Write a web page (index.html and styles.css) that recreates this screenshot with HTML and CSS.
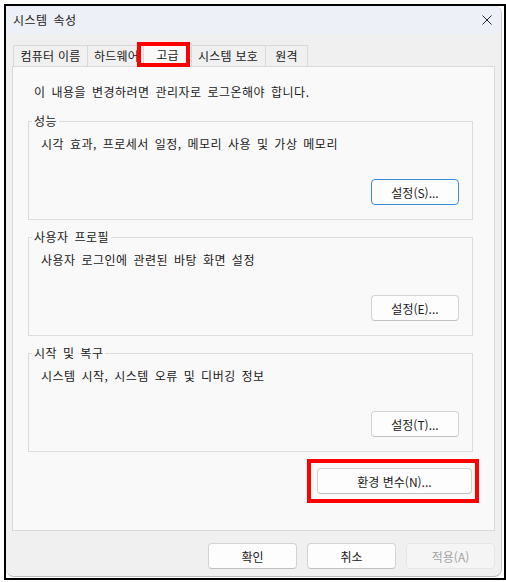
FILE: index.html
```html
<!DOCTYPE html>
<html lang="ko">
<head>
    <meta charset="UTF-8">
    <meta name="viewport" content="width=device-width, initial-scale=1.0">
    <title>시스템 속성</title>
    <link rel="stylesheet" href="styles.css">
</head>
<body>
    <div class="frame">
        <div class="window">
            <div class="titlebar">
                <span class="title">시스템 속성</span>
                <span class="close">
                    <svg width="10" height="10" viewBox="0 0 10 10">
                        <path d="M0.5 0.5 L9.5 9.5 M9.5 0.5 L0.5 9.5" stroke="#222" stroke-width="1" fill="none"/>
                    </svg>
                </span>
            </div>

            <div class="content">
                <!-- tab strip -->
                <div class="tabs">
                    <div class="tab t1">컴퓨터 이름</div>
                    <div class="tab t2">하드웨어</div>
                    <div class="tab t3 active">고급<span class="mark"></span></div>
                    <div class="tab t4">시스템 보호</div>
                    <div class="tab t5">원격</div>
                </div>

                <div class="panel">
                    <p class="info">이 내용을 변경하려면 관리자로 로그온해야 합니다.</p>

                    <fieldset class="group">
                        <legend>성능</legend>
                        <p class="desc">시각 효과, 프로세서 일정, 메모리 사용 및 가상 메모리</p>
                        <div class="actions">
                            <button class="btn focus">설정(S)...</button>
                        </div>
                    </fieldset>

                    <fieldset class="group">
                        <legend>사용자 프로필</legend>
                        <p class="desc">사용자 로그인에 관련된 바탕 화면 설정</p>
                        <div class="actions">
                            <button class="btn">설정(E)...</button>
                        </div>
                    </fieldset>

                    <fieldset class="group">
                        <legend>시작 및 복구</legend>
                        <p class="desc">시스템 시작, 시스템 오류 및 디버깅 정보</p>
                        <div class="actions">
                            <button class="btn">설정(T)...</button>
                        </div>
                    </fieldset>

                    <div class="env">
                        <button class="btn wide">환경 변수(N)...<span class="mark"></span></button>
                    </div>
                </div>

                <div class="footer">
                    <button class="btn">확인</button>
                    <button class="btn">취소</button>
                    <button class="btn disabled">적용(A)</button>
                </div>
            </div>
        </div>
    </div>
</body>
</html>
```

FILE: styles.css
```css
* {
    box-sizing: border-box;
}

body {
    margin: 0;
    background: #ffffff;
    font-family: "Noto Sans CJK KR", "Noto Sans", sans-serif;
    font-size: 12px;
    color: #1a1a1a;
}

.frame {
    margin: 4px 0 0 4px;
    width: 502px;
    height: 576px;
    border: 2px solid #000000;
    background: #ffffff;
}

.window {
    width: 496px;
    height: 571px;
    background: #f0f0f0;
    border-right: 1px solid #c4c4c4;
    border-bottom: 1px solid #bdbdbd;
    border-radius: 0 8px 8px 8px;
    overflow: hidden;
}

.titlebar {
    height: 28px;
    display: flex;
    align-items: center;
    justify-content: space-between;
    padding: 0 9px 0 7px;
    background: #edf1f7;
}

.title,
.info,
.desc,
.group legend {
    letter-spacing: 0.5px;
    word-spacing: 2px;
}

.title {
    line-height: 16px;
}

.close {
    display: flex;
    width: 10px;
    height: 10px;
}

.content {
    padding: 11px 6px 0 6px;
}

.tabs {
    display: flex;
    align-items: flex-end;
    height: 21px;
    padding-left: 1px;
}

.tab {
    position: relative;
    height: 21px;
    line-height: 20px;
    text-align: center;
    background: #f0f0f0;
    border: 1px solid #d9d9d9;
    border-bottom: none;
    margin-left: -1px;
    letter-spacing: 0.2px;
}

.t1 { width: 75px; margin-left: 0; }
.t2 { width: 59px; }
.t3 { width: 49px; margin-left: -3px; }
.t4 { width: 76px; margin-left: -2px; }
.t5 { width: 43px; }

.tab.active {
    height: 24px;
    line-height: 22px;
    margin-bottom: -1px;
    background: #f9f9f9;
    z-index: 1;
}

.tab .mark {
    position: absolute;
    top: -2px;
    left: -7px;
    right: 1px;
    bottom: 0;
    border: 4px solid #ff0000;
}

.panel {
    height: 465px;
    background: #f9f9f9;
    border: 1px solid #d9d9d9;
    padding: 17px 21px 0 15px;
}

.info {
    margin: 0 0 0 6px;
    line-height: 16px;
}

.group {
    margin: 9px 0 0 0;
    padding: 0 13px 14px 0;
    border: 1px solid #dcdcdc;
    min-width: 0;
}

.panel .info + .group {
    margin-top: 13px;
}

.group legend {
    margin-left: 3px;
    padding: 0 2px;
    line-height: 16px;
}

.desc {
    margin: 7px 0 0 12px;
    line-height: 16px;
}

.actions {
    display: flex;
    justify-content: flex-end;
    margin-top: 27px;
}

.btn {
    position: relative;
    width: 88px;
    height: 26px;
    padding: 0;
    font-family: inherit;
    font-size: 12px;
    color: #1a1a1a;
    background: #fdfdfd;
    border: 1px solid #d3d3d3;
    border-bottom-color: #bfbfbf;
    border-radius: 4px;
}

.btn.focus {
    border: 1px solid #3c8ad6;
}

.btn.wide {
    width: 155px;
}

.btn .mark {
    position: absolute;
    top: -10px;
    left: -11px;
    right: -8px;
    bottom: -10px;
    border: 4px solid #ff0000;
}

.env {
    display: flex;
    justify-content: flex-end;
    margin-top: 16px;
    padding-right: 1px;
}

.footer {
    display: flex;
    justify-content: flex-end;
    gap: 10px;
    margin-top: 12px;
}

.footer .btn {
    width: 89px;
}

.btn.disabled {
    color: #a3a3a3;
    background: #f5f5f5;
    border-color: #e6e6e6;
}
```
